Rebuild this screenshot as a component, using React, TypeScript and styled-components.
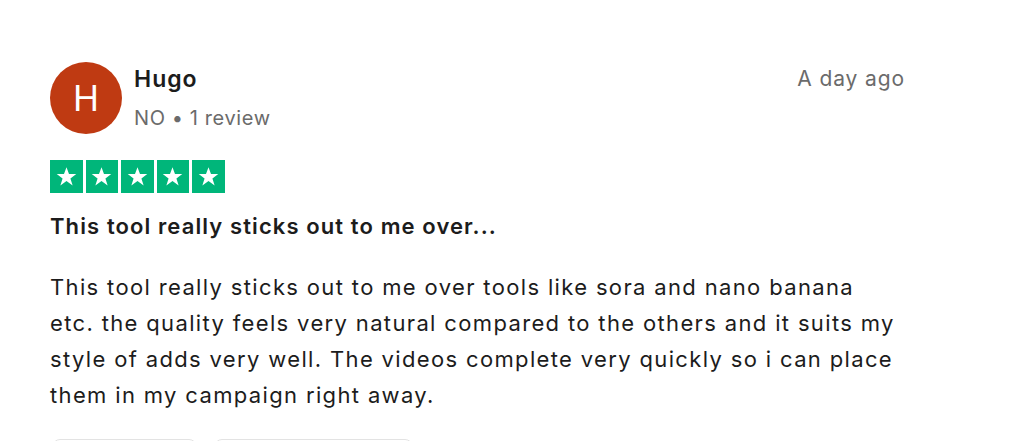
import React from "react";
import styled, { createGlobalStyle } from "styled-components";

const GlobalStyle = createGlobalStyle`
  html, body {
    margin: 0;
    padding: 0;
    height: 100%;
    overflow: hidden;
    background: #ffffff;
  }
  body {
    font-family: Inter, "Liberation Sans", sans-serif;
    color: #1c1c1c;
    -webkit-font-smoothing: antialiased;
  }
`;

const Card = styled.article`
  width: 855px;
  padding: 62px 0 0 50px;
`;

const Header = styled.header`
  display: flex;
  align-items: flex-start;
  gap: 12px;
`;

const Avatar = styled.div`
  width: 72px;
  height: 72px;
  border-radius: 50%;
  background: #bf3a12;
  color: #ffffff;
  display: flex;
  align-items: center;
  justify-content: center;
  font-size: 35px;
  font-weight: 400;
  flex-shrink: 0;
`;

const Consumer = styled.div`
  flex: 1;
  display: flex;
  flex-direction: column;
  padding-top: 2px;
`;

const Name = styled.span`
  font-size: 23px;
  line-height: 30px;
  font-weight: 600;
  letter-spacing: 1px;
  color: #1c1c1c;
`;

const Meta = styled.span`
  margin-top: 11px;
  font-size: 20px;
  line-height: 26px;
  letter-spacing: 0.6px;
  color: #6b6b6b;
`;

const Date = styled.time`
  padding-top: 3px;
  font-size: 21px;
  line-height: 28px;
  letter-spacing: 0.9px;
  color: #6b6b6b;
`;

const Stars = styled.div`
  display: flex;
  gap: 3px;
  margin-top: 26px;
`;

const StarBox = styled.span`
  width: 32.5px;
  height: 33px;
  background: #00b67a;
  display: flex;
  align-items: center;
  justify-content: center;
`;

const Title = styled.h2`
  margin: 19px 0 0;
  font-size: 22px;
  line-height: 28px;
  font-weight: 600;
  letter-spacing: 1.1px;
  color: #1c1c1c;
`;

const Body = styled.p`
  margin: 29px 0 0;
  width: 846px;
  font-size: 22px;
  line-height: 36px;
  letter-spacing: 1.35px;
  color: #1c1c1c;
`;

const Actions = styled.div`
  display: flex;
  gap: 17px;
  margin-top: 26px;
  padding-left: 2px;
`;

const ActionButton = styled.button<{ $w: number }>`
  width: ${(p) => p.$w}px;
  height: 40px;
  border: 1px solid #e3e3e3;
  border-radius: 8px;
  background: #ffffff;
`;

function Star() {
  return (
    <svg width="23" height="23" viewBox="0 0 24 24">
      <path
        d="M12 2.3l2.6 7.2h7.6l-6.1 4.5 2.3 7.3L12 16.8l-6.4 4.5 2.3-7.3-6.1-4.5h7.6z"
        fill="#ffffff"
      />
    </svg>
  );
}

export default function App() {
  return (
    <>
      <GlobalStyle />
      <Card>
        <Header>
          <Avatar>H</Avatar>
          <Consumer>
            <Name>Hugo</Name>
            <Meta>NO • 1 review</Meta>
          </Consumer>
          <Date>A day ago</Date>
        </Header>
        <Stars>
          {[0, 1, 2, 3, 4].map((i) => (
            <StarBox key={i}>
              <Star />
            </StarBox>
          ))}
        </Stars>
        <Title>This tool really sticks out to me over...</Title>
        <Body>
          This tool really sticks out to me over tools like sora and nano banana
          etc. the quality feels very natural compared to the others and it suits
          my style of adds very well. The videos complete very quickly so i can
          place them in my campaign right away.
        </Body>
        <Actions>
          <ActionButton $w={145} />
          <ActionButton $w={199} />
        </Actions>
      </Card>
    </>
  );
}
